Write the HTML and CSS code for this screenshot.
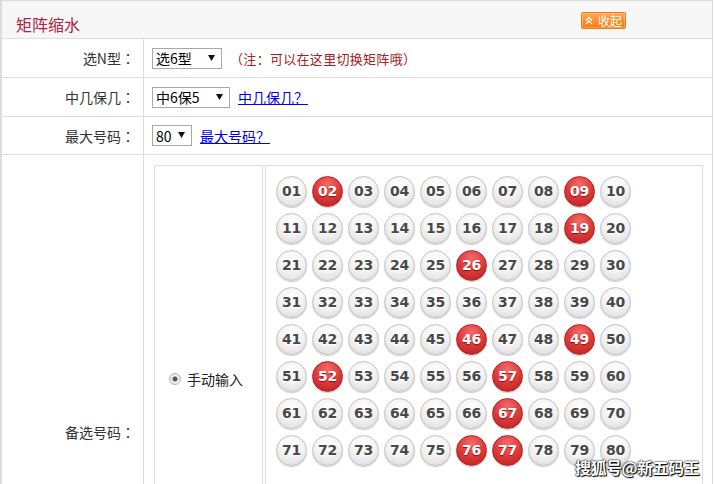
FILE: index.html
```html
<!DOCTYPE html>
<html lang="zh-CN">
<head>
<meta charset="utf-8">
<title>矩阵缩水</title>
<link rel="stylesheet" href="styles.css">
</head>
<body>
<div class="box">
  <div class="hd">
    <h2 class="title">矩阵缩水</h2>
    <a class="btn-fold"><svg class="ico" width="8" height="9" viewBox="0 0 8 9"><path d="M1 4.5 L4 1.5 L7 4.5 M1 8 L4 5 L7 8" fill="none" stroke="#fff" stroke-width="1.3"/></svg>收起</a>
  </div>
  <div class="row">
    <div class="lbl">选N型<span class="p">：</span></div>
    <div class="val"><span class="sel w1">选6型<svg class="arr" width="7" height="6" viewBox="0 0 7 6"><path d="M0 0 H7 L3.5 6 Z" fill="#111"/></svg></span><span class="note"><span class="p">（</span>注<span class="p">：</span>可以在这里切换矩阵哦<span class="p">）</span></span></div>
  </div>
  <div class="row">
    <div class="lbl">中几保几<span class="p">：</span></div>
    <div class="val"><span class="sel w2">中6保5<svg class="arr" width="7" height="6" viewBox="0 0 7 6"><path d="M0 0 H7 L3.5 6 Z" fill="#111"/></svg></span><a class="lnk">中几保几<span class="p">？</span></a></div>
  </div>
  <div class="row r3">
    <div class="lbl">最大号码<span class="p">：</span></div>
    <div class="val"><span class="sel w3">80<svg class="arr" width="7" height="6" viewBox="0 0 7 6"><path d="M0 0 H7 L3.5 6 Z" fill="#111"/></svg></span><a class="lnk">最大号码<span class="p">？</span></a></div>
  </div>
  <div class="row big">
    <div class="lbl">备选号码<span class="p">：</span></div>
    <div class="val pad">
      <div class="panels">
        <div class="mode"><label class="opt"><span class="radio"></span>手动输入</label></div>
        <div class="balls" id="balls"></div>
      </div>
      <div class="spacer"></div>
    </div>
  </div>
</div>
<div class="wm">搜狐号@新五码王</div>
<script>
(function(){
  var red=[2,9,19,26,46,49,52,57,67,76,77];
  var box=document.getElementById('balls');
  var h='';
  for(var i=1;i<=80;i++){
    var n=i<10?'0'+i:''+i;
    h+='<span class="ball'+(red.indexOf(i)>=0?' on':'')+'">'+n+'</span>';
  }
  box.innerHTML=h;
})();
</script>
</body>
</html>
```
FILE: styles.css
```css
html, body {
  margin: 0;
  padding: 0;
  background: #fff;
}
body {
  font-family: "Noto Sans CJK SC", "Noto Sans", sans-serif;
  font-size: 13px;
  color: #333;
  width: 714px;
  height: 484px;
  overflow: hidden;
  position: relative;
}
.p {
  font-family: "Noto Sans CJK TC", "Noto Sans CJK SC", sans-serif;
}
.box {
  width: 713px;
  box-sizing: border-box;
  border-top: 1px solid #dcdcdc;
  border-left: 2px solid #dcdcdc;
  border-right: 1px solid #dcdcdc;
}
.hd {
  height: 37px;
  background: #f7f7f7;
  display: flex;
  align-items: flex-start;
  padding-left: 14px;
}
.title {
  margin: 14px 0 0 0;
  font-size: 16px;
  line-height: 18px;
  font-weight: normal;
  color: #ac2240;
}
.btn-fold {
  margin: 11px 86px 0 auto;
  width: 45px;
  height: 17px;
  box-sizing: border-box;
  border: 1px solid #ec7c18;
  border-radius: 2px;
  background: linear-gradient(#ffa850, #f7790f);
  color: #fff;
  font-size: 12px;
  line-height: 15px;
  display: flex;
  align-items: center;
  justify-content: flex-end;
  padding-right: 3px;
  gap: 5px;
  box-shadow: inset 0 0 0 1px rgba(255,255,255,.25);
}
.row {
  display: grid;
  grid-template-columns: 142px 1fr;
  border-top: 1px solid #dcdcdc;
  height: 38px;
}
.row.r3 { height: 37px; }
.row.big { height: auto; }
.lbl {
  border-right: 1px solid #dcdcdc;
  display: flex;
  align-items: center;
  justify-content: flex-end;
  padding-right: 8px;
  color: #333;
  font-size: 14px;
}
.val {
  display: flex;
  align-items: center;
  padding-left: 8px;
}
.sel {
  height: 21px;
  box-sizing: border-box;
  border: 1px solid #a9a9a9;
  background: #fff;
  color: #000;
  display: flex;
  align-items: center;
  padding-left: 3px;
  position: relative;
  font-size: 14px;
}
.sel .arr {
  position: absolute;
  right: 6px;
  top: 6px;
}
.w1 { width: 70px; }
.w2 { width: 78px; }
.w3 { width: 40px; }
.note {
  margin-left: 8px;
  color: #a82020;
  font-size: 13px;
  letter-spacing: 0.3px;
}
.lnk {
  margin-left: 8px;
  color: #0000ee;
  text-decoration: underline;
  font-size: 14px;
}
.val.pad {
  display: block;
  padding: 10px 9px 10px 10px;
}
.panels {
  display: flex;
  gap: 2px;
  height: 426px;
}
.mode {
  width: 109px;
  box-sizing: border-box;
  border: 1px solid #dcdcdc;
  display: flex;
  align-items: center;
  justify-content: center;
}
.opt {
  display: flex;
  align-items: center;
  gap: 6px;
  color: #222;
  font-size: 14px;
  margin-right: 5px;
  margin-top: 1px;
}
.radio {
  width: 12px;
  height: 12px;
  box-sizing: border-box;
  border-radius: 50%;
  border: 1px solid #b4b4b4;
  background: radial-gradient(circle, #5a5a5a 0, #5a5a5a 2.2px, #e8e8e8 2.8px, #f4f4f4 100%);
}
.balls {
  flex: 1;
  box-sizing: border-box;
  border: 1px solid #dcdcdc;
  padding: 10px;
  display: grid;
  grid-template-columns: repeat(10, 31px);
  grid-auto-rows: 31px;
  column-gap: 5px;
  row-gap: 6px;
  align-content: start;
}
.ball {
  width: 31px;
  height: 31px;
  box-sizing: border-box;
  border-radius: 50%;
  border: 1px solid #c2c2c2;
  background: radial-gradient(circle at 50% 30%, #ffffff 0%, #f4f4f4 45%, #d9d9d9 100%);
  box-shadow: 0 1px 1px rgba(0,0,0,.2);
  font-family: "DejaVu Sans", Verdana, sans-serif;
  font-weight: bold;
  font-size: 14px;
  line-height: 29px;
  text-align: center;
  color: #484848;
  text-shadow: 0 1px 0 #fff;
  letter-spacing: -0.3px;
}
.ball.on {
  border-color: #b32424;
  background: radial-gradient(circle at 50% 25%, #f56a6a 0%, #de3a3a 50%, #b41f1f 100%);
  color: #fff;
  text-shadow: 0 1px 1px #8a1010;
}
.spacer { height: 108px; }
.wm {
  position: absolute;
  left: 575px;
  top: 455px;
  color: #fff;
  font-family: "Noto Sans CJK SC", sans-serif;
  font-size: 16px;
  font-weight: bold;
  letter-spacing: -0.5px;
  text-shadow: 0 0 2px #000, 0 0 1px #000, 1px 1px 1px #000;
}
```
